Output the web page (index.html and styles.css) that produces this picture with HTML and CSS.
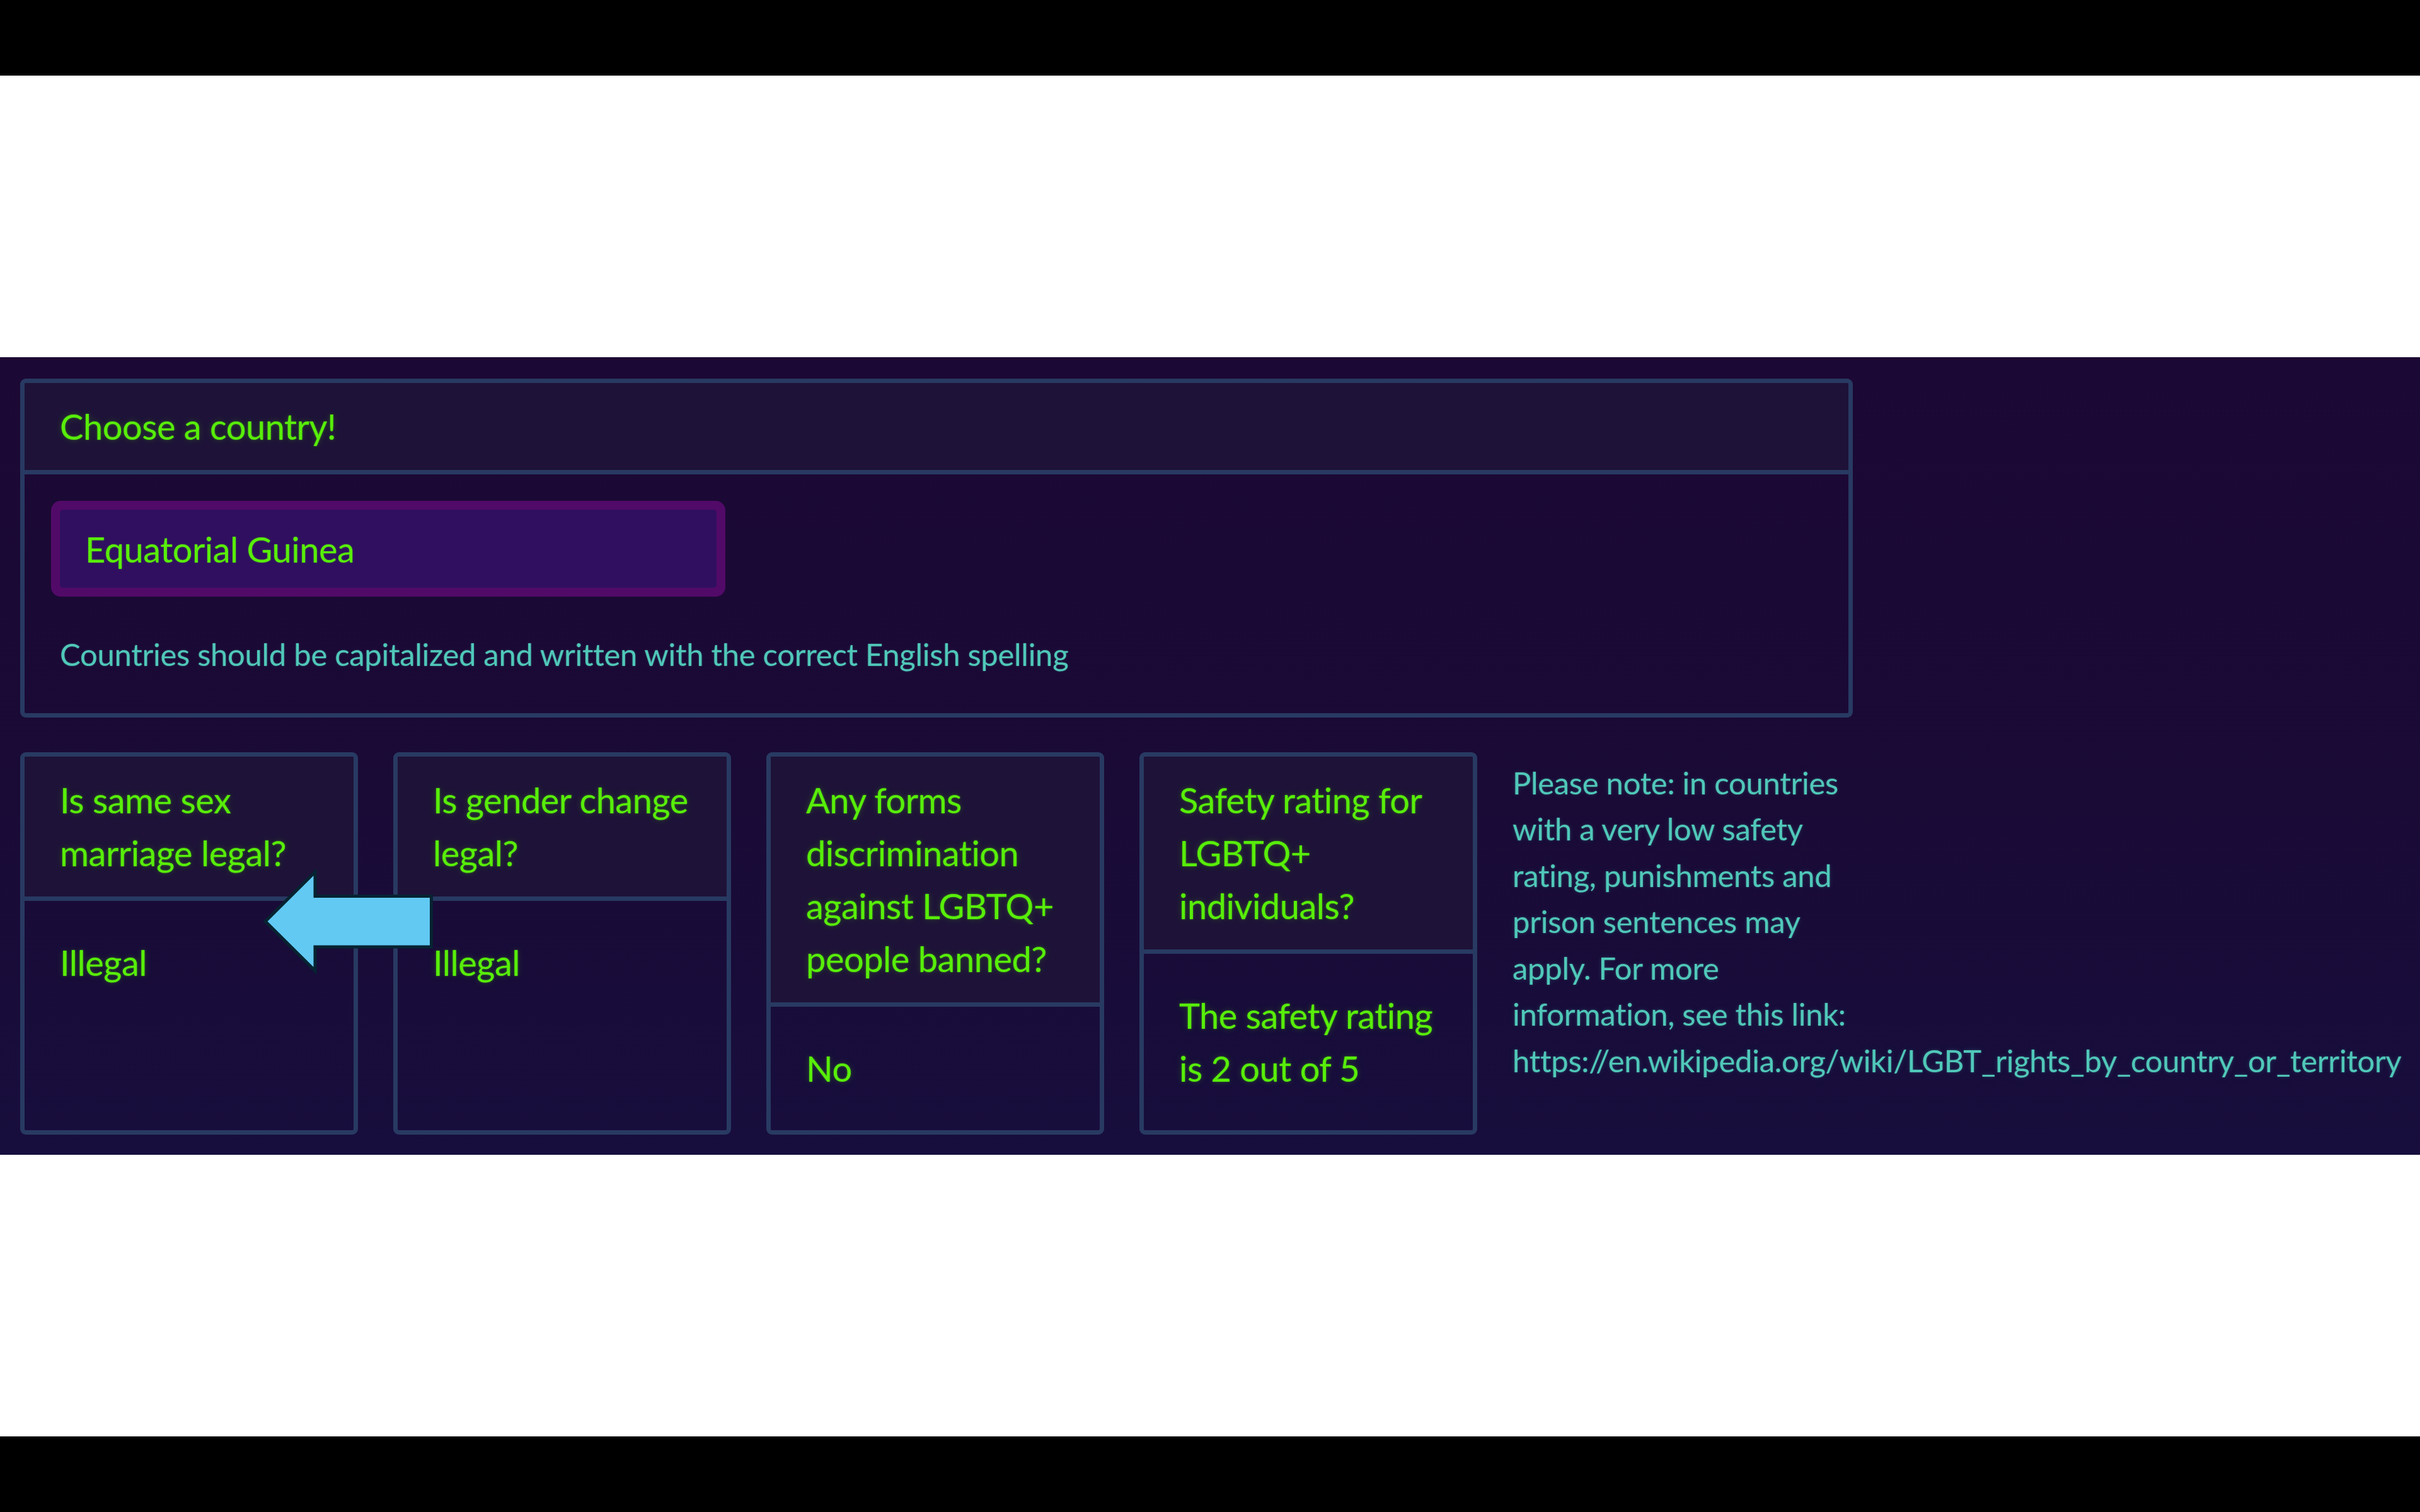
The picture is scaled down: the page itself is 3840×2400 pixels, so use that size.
FILE: index.html
```html
<!DOCTYPE html>
<html lang="en">
<head>
<meta charset="utf-8">
<title>LGBTQ+ rights by country</title>
<link rel="stylesheet" href="styles.css">
</head>
<body>
<div class="letterbox"></div>
<div class="spacer"></div>
<main class="app">
  <section class="card search-card">
    <div class="card-header">Choose a country!</div>
    <div class="card-body">
      <input class="country-input" type="text" value="Equatorial Guinea">
      <p class="help">Countries should be capitalized and written with the correct English spelling</p>
    </div>
  </section>
  <div class="results">
    <section class="card result">
      <div class="card-header">Is same sex marriage legal?</div>
      <div class="card-body">Illegal</div>
    </section>
    <section class="card result">
      <div class="card-header">Is gender change legal?</div>
      <div class="card-body">Illegal</div>
    </section>
    <section class="card result">
      <div class="card-header">Any forms discrimination against LGBTQ+ people banned?</div>
      <div class="card-body">No</div>
    </section>
    <section class="card result">
      <div class="card-header">Safety rating for LGBTQ+ individuals?</div>
      <div class="card-body">The safety rating is 2 out of 5</div>
    </section>
    <p class="note">Please note: in countries with a very low safety rating, punishments and prison sentences may apply. For more information, see this link: https://en.wikipedia.org/wiki/LGBT_rights_by_country_or_territory</p>
    <svg class="arrow" width="282" height="182" viewBox="0 0 282 182" aria-hidden="true">
      <path d="M9 90.5 L88 12 L88 50.5 L272.5 50.5 L272.5 131 L88 131 L88 169 Z" fill="#62c9f3" stroke="#062331" stroke-width="5" stroke-linejoin="miter"/>
    </svg>
  </div>
</main>
<div class="spacer"></div>
<div class="letterbox"></div>
</body>
</html>
```

FILE: styles.css
```css
html, body {
  margin: 0;
  padding: 0;
  background: #ffffff;
}

body {
  width: 3840px;
  height: 2400px;
  overflow: hidden;
  font-family: "Lato", "Open Sans", sans-serif;
}

.letterbox {
  height: 120px;
  background: #000000;
}

.spacer {
  height: 447px;
  background: #ffffff;
}

.app {
  box-sizing: border-box;
  height: 1266px;
  padding: 34px 0 0 32px;
  background: linear-gradient(180deg, #1c0834 0%, #1a0a36 55%, #170e3d 100%);
  font-size: 56px;
  line-height: 84px;
  letter-spacing: -0.5px;
  color: #58ee0a;
}

.card {
  box-sizing: border-box;
  border: 7px solid #283a62;
  border-radius: 9px;
  display: flex;
  flex-direction: column;
  overflow: hidden;
}

.card-header {
  padding: 27px 56px;
  background: #1e1238;
  border-bottom: 7px solid #283a62;
  color: #58ee0a;
  text-shadow: 0 0 3px rgba(88, 238, 10, 0.45), 0 0 12px rgba(88, 238, 10, 0.22);
}

.card-body {
  padding: 56px;
  color: #58ee0a;
  text-shadow: 0 0 3px rgba(88, 238, 10, 0.45), 0 0 12px rgba(88, 238, 10, 0.22);
}

.search-card {
  width: 2908px;
}

.country-input {
  display: block;
  box-sizing: border-box;
  width: 1042px;
  height: 124px;
  margin: 0;
  padding: 0 40px;
  border: none;
  border-radius: 5px;
  outline: none;
  background: #300f60;
  box-shadow: 0 0 0 14px #520a68;
  font-family: "Lato", "Open Sans", sans-serif;
  font-size: 56px;
  line-height: 84px;
  letter-spacing: -0.5px;
  color: #58ee0a;
  text-shadow: 0 0 3px rgba(88, 238, 10, 0.35);
}

.help {
  margin: 69px 0 0;
  font-size: 49px;
  line-height: 73.5px;
  letter-spacing: -0.3px;
  color: #50c8b9;
  text-shadow: 0 0 3px rgba(80, 200, 185, 0.35);
}

.results {
  position: relative;
  display: flex;
  align-items: stretch;
  gap: 56px;
  margin-top: 55px;
}

.result {
  flex: 0 0 536px;
  width: 536px;
}

.result .card-body {
  flex: 1;
}

.note {
  flex: 0 0 536px;
  min-width: 0;
  margin: 12px 0 0;
  font-size: 49px;
  line-height: 73.5px;
  letter-spacing: -0.3px;
  color: #50c8b9;
  text-shadow: 0 0 3px rgba(80, 200, 185, 0.35), 0 0 10px rgba(80, 200, 185, 0.15);
  white-space: normal;
}

.arrow {
  position: absolute;
  left: 380px;
  top: 178px;
}
```
